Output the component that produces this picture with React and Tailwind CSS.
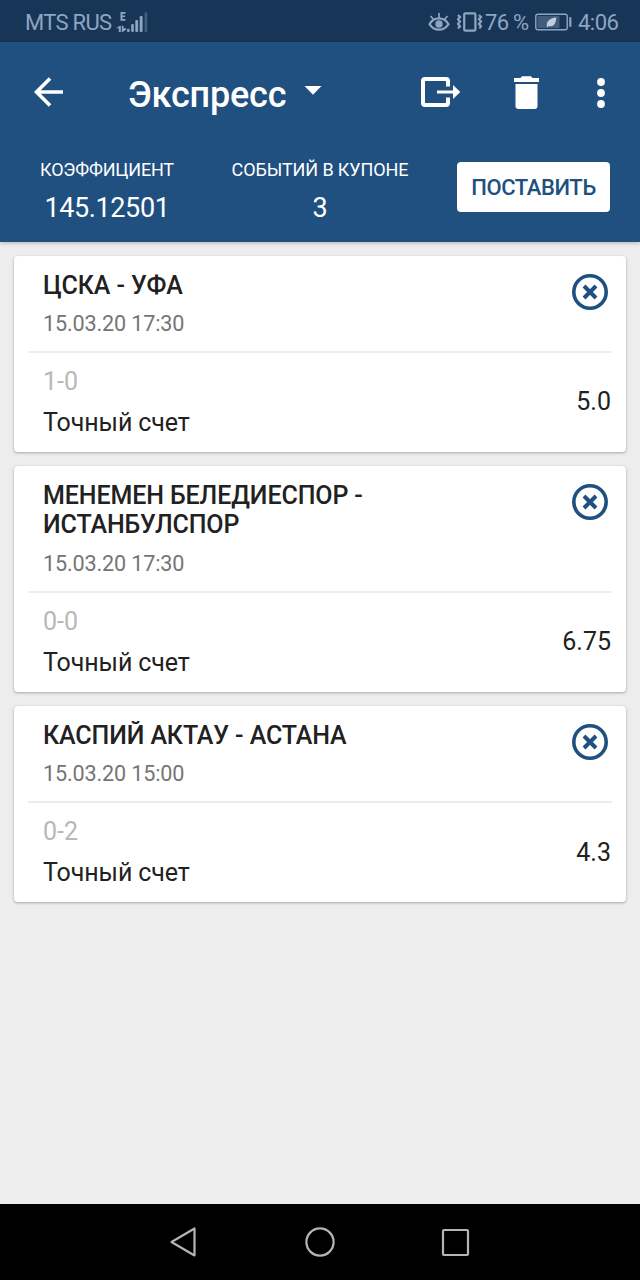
const EVENTS = [
  { id: 1, title: "ЦСКА - УФА", date: "15.03.20 17:30", score: "1-0", odds: "5.0" },
  { id: 2, title: "МЕНЕМЕН БЕЛЕДИЕСПОР - ИСТАНБУЛСПОР", date: "15.03.20 17:30", score: "0-0", odds: "6.75" },
  { id: 3, title: "КАСПИЙ АКТАУ - АСТАНА", date: "15.03.20 15:00", score: "0-2", odds: "4.3" },
];

function SignalIcon() {
  return (
    <svg width="32" height="22" viewBox="0 0 32 22" fill="currentColor">
      <path d="M4.500 1h5v1.700H6.500v1.700h2.600V6H6.500v2h3v1.700h-5z" />
      <path d="M2.800 21v-3.800H0L4 14.700h.8V21zM5.800 14.700h1.700v2.600h2.700v1.200L6.800 21h-1z" />
      <rect x="11" y="17.800" width="2.600" height="3.200" rx="1" />
      <rect x="15.200" y="13" width="2.600" height="8" rx="1" />
      <rect x="19.300" y="9" width="2.800" height="12" rx="1" />
      <rect x="23.700" y="5" width="2.900" height="16" rx="1" />
      <rect x="28.600" y="1.200" width="2.600" height="19.800" rx=".6" opacity=".35" />
    </svg>
  );
}

function EyeIcon() {
  return (
    <svg width="22" height="20" viewBox="0 0 22 20" fill="none" stroke="currentColor" strokeWidth="2.200">
      <path d="M1.500 12.200C6 4.500 16 4.500 20.500 12.200C16 19.500 6 19.500 1.500 12.200Z" />
      <circle cx="11" cy="12" r="3.700" fill="currentColor" stroke="none" />
      <path d="M11 1v6M2.500 4l3.500 4M19.500 4L16 8" strokeWidth="1.700" />
    </svg>
  );
}

function VibrateIcon() {
  return (
    <svg width="26" height="20" viewBox="0 0 26 20" fill="none" stroke="currentColor" strokeWidth="2.200">
      <rect x="7.200" y="1.300" width="11.200" height="17.400" rx="1.200" />
      <path d="M1 3l2 2-2 2.300 2 2.300-2 2.300 2 2.300-2 2.300M22 3l2 2-2 2.300 2 2.300-2 2.300 2 2.300-1.500 2.300" />
    </svg>
  );
}

function BatteryIcon() {
  return (
    <svg width="37" height="18" viewBox="0 0 37 18" fill="none">
      <rect x=".8" y="1.200" width="31.400" height="15.600" rx="2" stroke="currentColor" strokeWidth="1.400" />
      <rect x="2.500" y="3" width="22" height="12" fill="currentColor" opacity=".35" />
      <path d="M12.300 14.500c-2-5.500 2-9.500 9-10-.2 6.500-3.300 10-7.500 8.500z" fill="#c0cddd" />
      <rect x="34.200" y="4" width="2.200" height="10" rx="1" fill="currentColor" />
    </svg>
  );
}

function StatusBar() {
  return (
    <div className="flex h-[42px] items-center bg-[#173657] pt-[2px] pr-[21px] pl-[25px] text-[22px] leading-[26px] text-[#8fa5bf]">
      <span className="mt-px w-[91px] tracking-[-0.7px] whitespace-nowrap">MTS RUS</span>
      <SignalIcon />
      <span className="ml-auto"><EyeIcon /></span>
      <span className="ml-[7px]"><VibrateIcon /></span>
      <span className="mt-px ml-[2px] w-[46px] tracking-[-0.7px] whitespace-nowrap">76 %</span>
      <span className="ml-[4px]"><BatteryIcon /></span>
      <span className="mt-px ml-[6px] w-[41px] tracking-[-0.5px]">4:06</span>
    </div>
  );
}

function Header() {
  return (
    <header className="h-[200px] bg-[#20507f] text-white shadow-[0_1px_4px_rgba(0,0,0,0.25)]">
      <div className="flex h-[100px] items-center pl-[34px]">
        <svg width="30" height="30" viewBox="0 0 30 30" fill="none" stroke="currentColor" strokeWidth="3.600">
          <path d="M29 15H3M16 1.500L2.500 15L16 28.500" />
        </svg>
        <h1 className="mt-[5px] ml-[64px] w-[159px] text-[36px] leading-[42px] font-medium tracking-[-0.2px] whitespace-nowrap">Экспресс</h1>
        <svg className="mb-[3px] ml-[17px]" width="18" height="14" viewBox="0 0 18 14" fill="currentColor">
          <path d="M0.500 2h17L9 10.800z" />
        </svg>
        <svg className="ml-[99px]" width="40" height="30" viewBox="0 0 40 30" fill="none" stroke="currentColor" strokeWidth="4">
          <path d="M27 9.500V4a2 2 0 0 0-2-2H4a2 2 0 0 0-2 2v22a2 2 0 0 0 2 2h21a2 2 0 0 0 2-2v-5.500" />
          <path d="M16 15h17" strokeWidth="3" />
          <path d="M32 8l7.300 7-7.300 7z" fill="currentColor" stroke="none" />
        </svg>
        <svg className="ml-[53px]" width="25" height="33" viewBox="0 0 25 33" fill="currentColor">
          <path d="M0 2h6.500L8 .3h9L18.500 2H25v4H0zM1.500 8h22v22a3 3 0 0 1-3 3h-16a3 3 0 0 1-3-3z" />
        </svg>
        <svg className="mt-px ml-[58px]" width="8" height="30" viewBox="0 0 8 30" fill="currentColor">
          <circle cx="4" cy="4" r="3.900" />
          <circle cx="4" cy="15" r="3.900" />
          <circle cx="4" cy="26" r="3.900" />
        </svg>
      </div>
      <div className="flex pt-[17px] text-center">
        <div className="ml-[27px] w-[160px]">
          <div className="text-[18px] leading-[22px] tracking-[-0.2px]">КОЭФФИЦИЕНТ</div>
          <div className="mt-[11px] text-[27px] leading-[32px] tracking-[-0.4px]">145.12501</div>
        </div>
        <div className="ml-[33px] w-[200px]">
          <div className="text-[18px] leading-[22px] tracking-[-0.1px]">СОБЫТИЙ В КУПОНЕ</div>
          <div className="mt-[11px] text-[27px] leading-[32px]">3</div>
        </div>
        <button className="mt-[3px] ml-[37px] h-[50px] w-[153px] rounded-[4px] bg-white text-[22px] font-medium tracking-[-0.4px] text-[#20507f]">ПОСТАВИТЬ</button>
      </div>
    </header>
  );
}

function EventCard({ event }) {
  return (
    <article className="rounded-[4px] bg-white px-[14px] text-[#212121] shadow-[0_1px_3px_rgba(0,0,0,0.3)]">
      <div className="flex justify-between border-b-2 border-[#ececec] pt-[14.700px] pb-[14px] pl-[15px]">
        <div className="w-[400px]">
          <h2 className="text-[25px] leading-[29.300px] font-medium tracking-[-0.1px]">{event.title}</h2>
          <p className="mt-[11px] text-[21.600px] leading-[26px] tracking-[-0.150px] text-[#757575]">{event.date}</p>
        </div>
        <svg className="mt-[3px] mr-[4px]" width="36" height="36" viewBox="0 0 36 36" fill="none" stroke="#20507f">
          <circle cx="18" cy="18" r="16.200" strokeWidth="3.600" />
          <path d="M12 12l12 12M24 12L12 24" strokeWidth="4" />
        </svg>
      </div>
      <div className="flex items-center justify-between pt-[14px] pr-px pb-[14px] pl-[15px] text-[25px]">
        <div>
          <p className="leading-[30px] text-[#b8b8b8]">{event.score}</p>
          <p className="mt-[11px] leading-[30px] tracking-[-0.1px]">Точный счет</p>
        </div>
        <span className="leading-[30px]">{event.odds}</span>
      </div>
    </article>
  );
}

function NavBar() {
  return (
    <nav className="flex h-[76px] items-center bg-black pl-[169px]">
      <svg width="28" height="32" viewBox="0 0 28 32" fill="none" stroke="#b5b5b5" strokeWidth="2.200" strokeLinejoin="round">
        <path d="M25.500 2.500v27L2.500 16z" />
      </svg>
      <svg className="ml-[107px]" width="32" height="32" viewBox="0 0 32 32" fill="none" stroke="#b5b5b5" strokeWidth="2.200">
        <circle cx="16" cy="16" r="13.600" />
      </svg>
      <svg className="ml-[105px]" width="29" height="29" viewBox="0 0 29 29" fill="none" stroke="#b5b5b5" strokeWidth="2.200">
        <rect x="2" y="2" width="25" height="25" rx="1" />
      </svg>
    </nav>
  );
}

export default function App() {
  return (
    <div className="flex h-[1280px] w-[640px] flex-col overflow-hidden bg-[#ededed] font-['Roboto',sans-serif]">
      <StatusBar />
      <Header />
      <main className="flex grow flex-col gap-[14.400px] p-[14px]">
        {EVENTS.map((event) => (
          <EventCard key={event.id} event={event} />
        ))}
      </main>
      <NavBar />
    </div>
  );
}
